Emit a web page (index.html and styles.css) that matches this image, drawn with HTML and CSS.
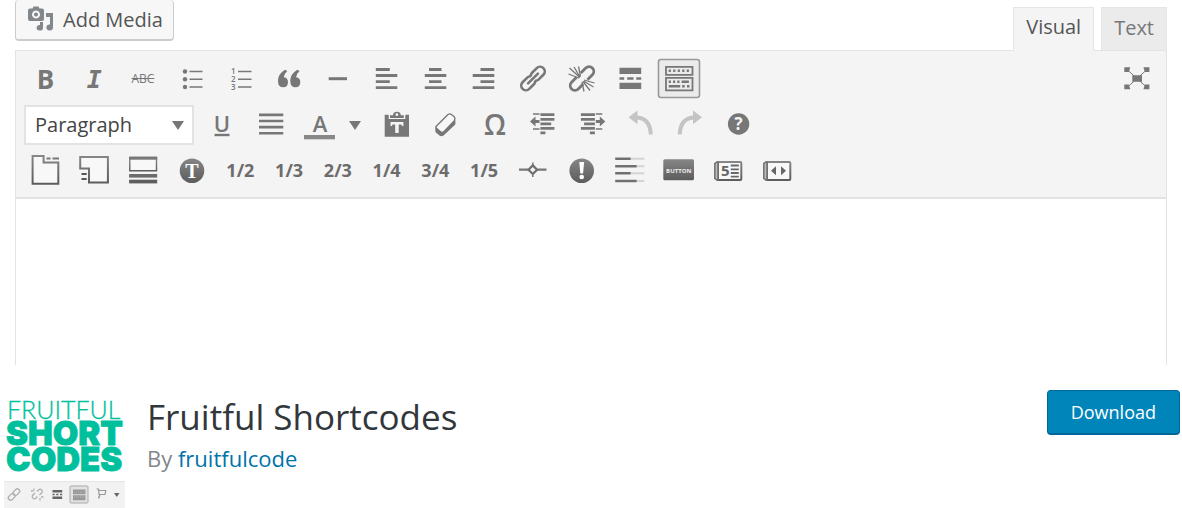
FILE: index.html
```
<!DOCTYPE html>
<html lang="en">
<head>
<meta charset="utf-8">
<title>Fruitful Shortcodes</title>
<link rel="stylesheet" href="styles.css">
</head>
<body>
<section class="editor" aria-label="Editor">
  <div class="editor-top">
    <button class="media" type="button">
      <svg class="media-icon" width="26" height="26" viewBox="0 0 26 26" aria-hidden="true">
        <path fill="#82878c" fill-rule="evenodd" d="M2 2.500h2.500l1-2h5l1 2H14q2 0 2 2V13q0 2-2 2H2q-2 0-2-2V4.500q0-2 2-2zM8 4.500a4 4 0 1 0 .01 0zM8 6.500a2 2 0 1 1-.01 0z"/>
        <path fill="#82878c" d="M18 7h7v14.500a3.300 3 0 1 1-3-3V11h-4zM12 16h3v6a3.200 2.800 0 1 1-3-3z"/>
      </svg>
      Add Media
    </button>
    <div class="tabs">
      <button class="tab tab-active" type="button">Visual</button>
      <button class="tab" type="button">Text</button>
    </div>
  </div>

  <div class="frame">
    <div class="toolbar">
      <div class="row">
        <div class="cells cells-14">
          <button class="tool bold" type="button">B</button>
          <button class="tool italic" type="button">I</button>
          <button class="tool strike" type="button">ABC</button>
          <button class="tool" type="button" aria-label="Bulleted list"><svg class="ic" viewBox="0 0 48 46"><g fill="#777"><circle cx="17" cy="15.500" r="2.200"/><circle cx="17" cy="23.300" r="2.200"/><circle cx="17" cy="31" r="2.200"/></g><path class="s" stroke-width="1.400" d="M21.500 15.500h13M21.500 23.300h13M21.500 31h13"/></svg></button>
          <button class="tool" type="button" aria-label="Numbered list"><svg class="ic" viewBox="0 0 48 46"><g class="digits"><text x="14" y="18">1</text><text x="14" y="26">2</text><text x="14" y="34">3</text></g><path class="s" stroke-width="1.400" d="M21 15.500h13.500M21 23.300h13.500M21 31h13.500"/></svg></button>
          <button class="tool" type="button" aria-label="Blockquote"><svg class="ic" viewBox="0 0 48 46"><path id="comma" fill="#777" d="M20 13.800l2.300 1.200q-3.300 3-3.500 6.300q4.200.7 4.200 5q0 5-4.800 5q-5.200 0-5.200-6.300q0-7 7-11.200z"/><use href="#comma" x="12.300"/></svg></button>
          <button class="tool" type="button" aria-label="Horizontal line"><svg class="ic" viewBox="0 0 48 46"><path class="s" stroke-width="3" d="M14.700 22.700h18.300"/></svg></button>
          <button class="tool" type="button" aria-label="Align left"><svg class="ic" viewBox="0 0 48 46"><path class="s" stroke-width="2.800" d="M12.800 13.500h14M12.800 19.500h21.500M12.800 25.600h14M12.800 31.600h21.500"/></svg></button>
          <button class="tool" type="button" aria-label="Align center"><svg class="ic" viewBox="0 0 48 46"><path class="s" stroke-width="2.800" d="M17 13.500h12.500M12.800 19.500h21.500M17 25.600h12.500M12.800 31.600h21.500"/></svg></button>
          <button class="tool" type="button" aria-label="Align right"><svg class="ic" viewBox="0 0 48 46"><path class="s" stroke-width="2.800" d="M20.500 13.500h13.800M12.700 19.500h21.600M20.500 25.600h13.800M12.700 31.600h21.600"/></svg></button>
          <button class="tool" type="button" aria-label="Insert link"><svg class="ic" viewBox="0 0 48 46"><g class="s" stroke-width="2.600" transform="rotate(-45 24 22.500)"><rect x="9.300" y="17.800" width="16" height="9.400" rx="4.700"/><rect x="22.700" y="17.800" width="16" height="9.400" rx="4.700"/><path stroke="#f4f4f4" stroke-width="5" d="M20.500 22.500h7"/><path stroke-linecap="round" d="M17 22.500h14"/></g></svg></button>
          <button class="tool" type="button" aria-label="Remove link"><svg class="ic" viewBox="0 0 48 46"><g class="s" stroke-width="2.800" transform="rotate(-45 24 22.500)"><path d="M21 27.200h-7a4.700 4.700 0 0 1 0-9.400h7M27 17.800h7a4.700 4.700 0 0 1 0 9.400h-7"/></g><path class="s" stroke-width="1.300" d="M22 21.500L11.500 12M22 21l-6-10M22.500 20.500l-2-10M21 22l-10.500-4M26 24l10.500 3M25.500 25l10 6M25 25.500l7 9M24 26l2 9.500"/></svg></button>
          <button class="tool" type="button" aria-label="Insert read more tag"><svg class="ic" viewBox="0 0 48 46"><path fill="#777" d="M12.500 11.700h21.700V18H12.500zM12.500 26.700h21.700V33H12.500zM12.500 21.200h4.700v2.500h-4.700zM20.200 21.200h6.300v2.500h-6.300zM29.300 21.200h4.900v2.500h-4.900z"/></svg></button>
          <button class="tool" type="button" aria-label="Toolbar toggle" aria-pressed="true"><svg class="ic" viewBox="0 0 48 46"><rect x="2.500" y="3.500" width="41" height="38" rx="2.500" fill="#ebebeb" stroke="#999" stroke-width="1.600"/><path class="s" stroke-width="1.800" d="M10 10.800h26.500v8H10zM10 21.900h26.500v12.500H10z"/><path class="s" stroke-width="2.400" d="M12.700 14.800h2.200m2.300 0h2.200m2.300 0h2.200m2.300 0h2.200m2.300 0h2.200M12.700 25.700h2.200m2.100 0h2.200m2.100 0h2.200m2.100 0h7.300M12.700 30.200h11.500m2 0h2.500m2.300 0h2.500"/></svg></button>
        </div>
        <button class="tool expand" type="button" aria-label="Distraction-free writing"><svg class="ic" viewBox="0 0 48 46"><path fill="#777" d="M19.300 19.300h9.700v6.400h-9.700zM11.300 11.300h6l-1.500 4.700h-4.500zM36.400 11.300h-6l1.500 4.700h4.500zM11.300 33.300h6l-1.500-4.700h-4.500zM36.400 33.300h-6l1.500-4.700h4.500z"/><path class="s" stroke-width="1" d="M14 13.500l20 18M34 13.500l-20 18"/></svg></button>
      </div>

      <div class="row">
        <div class="format">
          <select class="format-select" aria-label="Format"><option>Paragraph</option></select>
          <svg class="format-arrow" width="12" height="9" viewBox="0 0 12 9" aria-hidden="true"><path fill="#777" d="M0 0h12L6 9z"/></svg>
        </div>
        <button class="tool single" type="button" aria-label="Underline"><svg class="ic" viewBox="0 0 48 46"><text class="letter" x="24" y="30">U</text><path class="s" stroke-width="2.400" d="M16.500 33h15"/></svg></button>
        <button class="tool single" type="button" aria-label="Justify"><svg class="ic" viewBox="0 0 48 46"><path class="s" stroke-width="2.600" d="M12 12.900h24.300M12 19h24.300M12 25.100h24.300M12 31.200h24.300"/></svg></button>
        <button class="tool color" type="button" aria-label="Text color"><svg class="ic ic-wide" viewBox="0 0 78 46"><text class="letter" x="25" y="30">A</text><path fill="#888" d="M9 33h31v4.300H9z"/><path fill="#777" d="M54 19h12l-6 9z"/></svg></button>
        <div class="cells cells-8">
          <button class="tool" type="button" aria-label="Paste as text"><svg class="ic" viewBox="0 0 48 46"><path fill="#777" d="M11.700 12.700h4V17h16.600v-4.300H36v22H11.700zM17 16v-2.800h3q0-3.500 3.900-3.500t3.900 3.500h3V16z"/><circle cx="23.900" cy="12.700" r="1.400" fill="#f4f4f4"/><path fill="#f4f4f4" d="M17.500 20h12.900v4h-1.300l-.8-1.500h-2.600V31h-3.500v-8.500h-2.600l-.8 1.500h-1.300z"/></svg></button>
          <button class="tool" type="button" aria-label="Clear formatting"><svg class="ic" viewBox="0 0 48 46"><path fill="#f7f7f7" stroke="#777" stroke-width="1.400" stroke-linejoin="round" d="M14 24.500L26 12.500q1.500-1 3-.3l3 2.300q1.500 1.300.7 3.500v4L21 33q-1.500 1-3 0l-3-2.500q-1.300-1-1-3z"/><path fill="#777" d="M14 25l5.300 4.500q1 .5 2-.3L33 17v5.500L21 33.500q-1.500 1-3 0L14.500 30.500q-1-1.500-.5-5.500z"/></svg></button>
          <button class="tool" type="button" aria-label="Special character"><svg class="ic" viewBox="0 0 48 46"><text class="omega" x="24" y="33">Ω</text></svg></button>
          <button class="tool" type="button" aria-label="Decrease indent"><svg class="ic" viewBox="0 0 48 46"><g id="dent"><path class="s" stroke-width="2.800" d="M20.400 12.700h14M20.400 17.300h14M20.400 21.800h10.800M20.400 26.400h14M20.400 30.900h5M14 19.500h5.500"/><path class="s" stroke-width="1.300" d="M13 12h6.500M13 27h6.500"/><path fill="#777" d="M10 19.500l5.500-5v10z"/></g></svg></button>
          <button class="tool" type="button" aria-label="Increase indent"><svg class="ic" viewBox="0 0 48 46"><use href="#dent" transform="matrix(-1 0 0 1 47.300 0)"/></svg></button>
          <button class="tool" type="button" aria-label="Undo" disabled><svg class="ic" viewBox="0 0 48 46"><g id="undo"><path fill="none" stroke="#c4c4c4" stroke-width="4" d="M19 15.500q14 0 14.800 17"/><path fill="#c4c4c4" d="M11.500 15.300l9-6.800V22.200z"/></g></svg></button>
          <button class="tool" type="button" aria-label="Redo" disabled><svg class="ic" viewBox="0 0 48 46"><use href="#undo" transform="matrix(-1 0 0 1 47.500 0)"/></svg></button>
          <button class="tool" type="button" aria-label="Help"><svg class="ic" viewBox="0 0 48 46"><circle cx="23.600" cy="22" r="10.700" fill="#777"/><text class="mark" x="23.600" y="28">?</text></svg></button>
        </div>
      </div>

      <div class="row">
        <div class="cells cells-16">
          <button class="tool" type="button" aria-label="Tabs"><svg class="ic" viewBox="0 0 48 46"><defs><linearGradient id="shade" x1="0" y1="0" x2="0" y2="1"><stop offset="0" stop-color="#868686"/><stop offset="1" stop-color="#5c5c5c"/></linearGradient></defs><path class="g" stroke-width="2" d="M11.600 8h11v6.500h14.700v21.200H11.600z"/><path class="s" stroke-width="2" d="M25.500 10.500h4M31.500 10.500h6.500"/></svg></button>
          <button class="tool" type="button" aria-label="Vertical tabs"><svg class="ic" viewBox="0 0 48 46"><path class="g" stroke-width="2" d="M10.200 9h27.700v25.400H19V20.500h-8.800z"/><path stroke="#555" stroke-width="2" d="M11.500 26h5.200M11.500 31h5.200"/></svg></button>
          <button class="tool" type="button" aria-label="Accordion"><svg class="ic" viewBox="0 0 48 46"><path class="g" stroke-width="1.400" d="M10.800 9.500h26.700v13.200H10.800z"/><path fill="#777" d="M10.100 8.700h28.100v3H10.100z"/><path fill="#6c6c6c" d="M10.100 26h28.100v3.600H10.100z"/><path fill="#5e5e5e" d="M10.100 31.700h28.100v3.700H10.100z"/></svg></button>
          <button class="tool" type="button" aria-label="Titles"><svg class="ic" viewBox="0 0 48 46"><circle cx="24" cy="22.700" r="12.300" fill="url(#shade)"/><text class="serif" x="24" y="29.500">T</text></svg></button>
          <button class="tool ratio" type="button">1/2</button>
          <button class="tool ratio" type="button">1/3</button>
          <button class="tool ratio" type="button">2/3</button>
          <button class="tool ratio" type="button">1/4</button>
          <button class="tool ratio" type="button">3/4</button>
          <button class="tool ratio" type="button">1/5</button>
          <button class="tool" type="button" aria-label="Separator"><svg class="ic" viewBox="0 0 48 46"><path class="s" stroke-width="2.200" d="M10 21.700h9M28.500 21.700h9"/><path fill="#f4f4f4" stroke="#6d6d6d" stroke-width="2.200" d="M23.800 17.400l4.300 4.300l-4.300 4.300l-4.300-4.300z"/><path class="s" stroke-width="1.500" d="M23.800 14.500V17M23.800 26.400v2.500"/></svg></button>
          <button class="tool" type="button" aria-label="Alert"><svg class="ic" viewBox="0 0 48 46"><circle cx="23.700" cy="22.700" r="12.300" fill="url(#shade)"/><path fill="#fff" d="M21.300 14h4.800l-1 11.500h-2.800z"/><circle cx="23.700" cy="29" r="2.300" fill="#fff"/></svg></button>
          <button class="tool" type="button" aria-label="Progress bars"><svg class="ic" viewBox="0 0 48 46"><path stroke="#d4d4d4" stroke-width="2" d="M24 10.700h14.300M30 18.300h8.300M24 25.300h14.300M30 33h8.300"/><path stroke="#707070" stroke-width="2.400" d="M9.200 10.700h15.400M9.200 18.300h21.400M9.200 25.300h15.400M9.200 33h21.400"/></svg></button>
          <button class="tool" type="button" aria-label="Button"><svg class="ic" viewBox="0 0 48 46"><rect x="8.300" y="11.300" width="30.700" height="21" rx="1.500" fill="url(#shade)"/><text class="tiny" x="23.700" y="24.500">BUTTON</text></svg></button>
          <button class="tool" type="button" aria-label="Recent posts"><svg class="ic" viewBox="0 0 48 46"><g id="pages"><path class="g" stroke-width="2" d="M14 13.900h22.300q1 0 1 1V31q0 1-1 1H14z"/><path fill="#bbb" stroke="#707070" stroke-width="1.500" d="M14 14h-1.200l-2 1.700v14.600l2 1.700H14z"/></g><text class="five" x="21.200" y="28">5</text><path stroke="#686868" stroke-width="1.800" d="M26.800 17.500h8M26.800 21.300h8M26.800 25h8M26.800 28.700h8"/></svg></button>
          <button class="tool" type="button" aria-label="Post slider"><svg class="ic" viewBox="0 0 48 46"><use href="#pages"/><path fill="#666" d="M18 22.700l5-4.500v9zM33 22.700l-5-4.500v9z"/></svg></button>
        </div>
      </div>
    </div>
    <textarea class="canvas" aria-label="Content"></textarea>
  </div>
</section>

<header class="plugin">
  <svg class="logo" width="121" height="118" viewBox="0 0 121 118" role="img" aria-label="Fruitful Shortcodes logo">
    <text class="logo-thin" x="3" y="29">FRUITFUL</text>
    <text class="logo-heavy" x="2" y="55">SHORT</text>
    <text class="logo-heavy" x="2" y="81">CODES</text>
    <path fill="#f2f2f2" d="M0 91h121v27H0z"/><path fill="#e6e6e6" d="M0 91h121v1H0z"/>
    <g fill="none" stroke="#b0b0b0" stroke-width="1.300">
      <g transform="rotate(-45 10 104.500)"><rect x="3" y="102.200" width="7.500" height="4.600" rx="2.300"/><rect x="9.500" y="102.200" width="7.500" height="4.600" rx="2.300"/></g>
      <path d="M31 103l-2.500 2.500a2.200 2.200 0 0 0 3 3l2-2M33 101.500l2-2a2.200 2.200 0 0 1 3 3l-2.500 2.500M27 101h2.500M30 98.500v2M37 107h2.500M36 108v2.500"/>
    </g>
    <path fill="#666" d="M48.500 100h9.700v2.500h-9.700zM48.500 106.500h9.700v2.500h-9.700zM48.500 103.800h2.200v1.500h-2.200zM52.200 103.800h2.200v1.500h-2.200zM56 103.800h2.200v1.500H56z"/>
    <rect x="66" y="96" width="18" height="17" rx="1" fill="#e2e2e2" stroke="#aaa"/>
    <path fill="#999" d="M69 99.500h12.500v4.700H69zM69 105.200h12.500v5H69z"/>
    <path fill="none" stroke="#b8b8b8" stroke-dasharray="1 1" d="M70 102h10.500M70 107h10.500"/>
    <path fill="none" stroke="#999" stroke-width="1.200" d="M92.500 99h2l.6 5.500h5.900l.7-4H95M96 104.500l-1 2.500"/><circle cx="95" cy="107.500" r="1" fill="#999"/>
    <path fill="#666" d="M110 103h5.500l-2.700 4z"/>
  </svg>
  <div class="plugin-text">
    <h1 class="plugin-title">Fruitful Shortcodes</h1>
    <p class="byline">By <a class="author" href="#">fruitfulcode</a></p>
  </div>
  <button class="download" type="button">Download</button>
</header>
</body>
</html>
```
FILE: styles.css
```
* { box-sizing: border-box; }

body {
  margin: 0;
  background: #fff;
  color: #555;
  font-family: "Open Sans", "Noto Sans", sans-serif;
}

button, select, textarea { font: inherit; }

.editor { margin: 0 15px; }

.editor-top {
  display: flex;
  justify-content: space-between;
  align-items: flex-start;
  height: 50px;
}

.media {
  display: flex;
  align-items: center;
  gap: 9px;
  height: 41px;
  padding: 0 10px 1px 12px;
  border: 1px solid #ccc;
  border-top: 0;
  border-bottom: 2px solid #ccc;
  border-radius: 4px;
  background: #f7f7f7;
  color: #555;
  font-size: 20px;
}

.media-icon { flex: none; }

.tabs {
  display: flex;
  align-items: flex-end;
  align-self: stretch;
  gap: 7px;
}

.tab {
  height: 43px;
  padding: 0 12px 4px;
  border: 1px solid #e5e5e5;
  border-bottom: 0;
  background: #ebebeb;
  color: #777;
  font-size: 20px;
}

.tab-active {
  position: relative;
  height: 44px;
  margin-bottom: -1px;
  padding-bottom: 6px;
  background: #f4f4f4;
  color: #555;
}

.frame {
  border: 1px solid #e3e3e3;
  border-bottom: 0;
}

.toolbar {
  padding: 5px 5px 3px;
  border-bottom: 2px solid #e3e3e3;
  background: #f4f4f4;
}

.row {
  display: flex;
  align-items: center;
  height: 46px;
}

.cells { display: grid; }
.cells-14 { width: 683px; grid-template-columns: repeat(14, 1fr); }
.cells-8 { width: 390px; grid-template-columns: repeat(8, 1fr); }
.cells-16 { width: 780px; grid-template-columns: repeat(16, 1fr); }

.tool {
  display: flex;
  align-items: center;
  justify-content: center;
  min-width: 0;
  height: 46px;
  padding: 0;
  border: 0;
  background: none;
  color: #777;
}

.single { width: 49px; }
.color { width: 78px; }
.expand { margin-left: auto; }

.ic { display: block; flex: none; width: 48px; height: 46px; }
.ic-wide { width: 78px; }

.s { fill: none; stroke: #777; }
.g { fill: #f8f8f8; stroke: url(#shade); }

.bold { font-size: 26px; font-weight: 700; }
.italic { font: italic 700 25px "DejaVu Sans Mono", monospace; }
.strike { padding-bottom: 2px; font-size: 12px; text-decoration: line-through; }

.ratio {
  padding-bottom: 2px;
  color: #6c6c6c;
  font-size: 18px;
  font-weight: 700;
}

.digits { fill: #777; font-size: 8px; font-weight: 600; }
.letter { fill: #777; font-size: 22px; font-weight: 600; text-anchor: middle; }
.omega { fill: #777; font-size: 28px; font-weight: 600; text-anchor: middle; }
.mark { fill: #f4f4f4; font-size: 17px; font-weight: 700; text-anchor: middle; }
.serif { fill: #fff; font: 700 20px "Liberation Serif", serif; text-anchor: middle; }
.tiny { fill: #eee; font-size: 6px; font-weight: 700; text-anchor: middle; }
.five { fill: #666; font-size: 15px; font-weight: 700; text-anchor: middle; }

.format {
  position: relative;
  width: 170px;
  margin: 0 3px;
}

.format-select {
  display: block;
  width: 100%;
  height: 40px;
  padding: 0 9px 1px;
  border: 2px solid #e3e3e3;
  border-radius: 0;
  background: #fff;
  color: #444;
  font-size: 20px;
  appearance: none;
}

.format-arrow {
  position: absolute;
  top: 16px;
  right: 10px;
  pointer-events: none;
}

.canvas {
  display: block;
  width: 100%;
  height: 166px;
  border: 0;
  background: #fff;
  resize: none;
}

.plugin {
  display: flex;
  align-items: flex-start;
  padding: 25px 2px 0 4px;
}

.logo { display: block; flex: none; }
.logo-thin { fill: #00bf9c; stroke: #00bf9c; stroke-width: 0.3; font: 300 25px Lato, sans-serif; }
.logo-heavy { fill: #00bf9c; stroke: #00bf9c; stroke-width: 0.8; font: 900 33px Inter, sans-serif; }

.plugin-text {
  flex: 1;
  padding: 4px 0 0 22px;
}

.plugin-title {
  margin: 0;
  color: #32373c;
  font-size: 35px;
  font-weight: 400;
  line-height: 46px;
}

.byline {
  margin: 0;
  color: #82878c;
  font-size: 22px;
  line-height: 36px;
}

.author { color: #0073aa; text-decoration: none; }

.download {
  height: 45px;
  padding: 0 23px;
  border: 1px solid #006799;
  border-bottom-width: 2px;
  border-radius: 4px;
  background: #0085ba;
  color: #fff;
  font-size: 18px;
}
```
